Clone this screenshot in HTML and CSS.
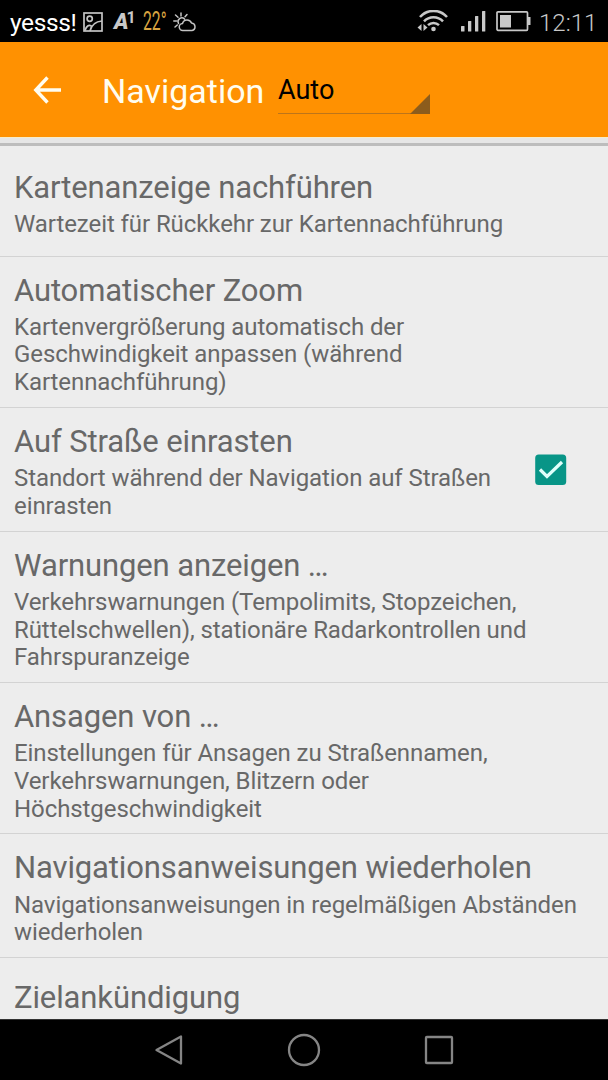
FILE: index.html
```html
<!DOCTYPE html>
<html lang="de">
<head>
<meta charset="utf-8">
<title>Navigation</title>
<link rel="stylesheet" href="styles.css">
</head>
<body>
<div class="screen">
  <header class="status">
    <div class="status-left">
      <span class="carrier">yesss!</span>
      <svg class="i-image" width="20" height="20" viewBox="0 0 20 20" fill="none" stroke="#c4c4c4" stroke-width="1.700"><rect x="1" y="1" width="18" height="18"/><circle cx="6.700" cy="6.700" r="2.600"/><path d="M2 18.500c1.500-4.500 3.500-6 6.500-4.500M7 19c1.500-6 5-9.500 12-10"/></svg>
      <span class="a1">A<sup>1</sup></span>
      <span class="temp">22°</span>
      <svg class="i-weather" width="24" height="20" viewBox="0 0 24 20" fill="none" stroke="#c4c4c4" stroke-width="1.500" stroke-linecap="round" stroke-linejoin="round"><path d="M10 18.500a3.500 3.500 0 0 1-.5-7 4.700 4.700 0 0 1 9-.5 3.800 3.800 0 0 1 .5 7.500zM5.500 11.500a3.800 3.800 0 0 1 6-4.500M8 1v3M2.500 3l2.500 2.200M.8 9h2.700M14 2.500l-2 2.300M2 15l2.300-2"/></svg>
    </div>
    <div class="status-right">
      <svg class="i-wifi" width="32" height="22" viewBox="0 0 32 22" fill="none" stroke="#c8c8c8" stroke-width="2.500"><path d="M3 7a18 18 0 0 1 27 0M7 11.300a13 13 0 0 1 19 0M11 15.200a8 8 0 0 1 11 0"/><circle cx="16.500" cy="19" r="2.300" fill="#c8c8c8" stroke="none"/><path d="M4.500 14v7L.5 17.500zM6.500 14v7l4-3.500z" fill="#c8c8c8" stroke="none"/></svg>
      <svg class="i-signal" width="26" height="22" viewBox="0 0 26 22" fill="#c8c8c8"><rect x="1" y="16" width="3.500" height="5.500" rx=".5"/><rect x="8" y="11" width="3.300" height="10.500" rx=".5"/><rect x="15" y="6" width="3.300" height="15.500" rx=".5"/><rect x="22" y="1" width="3.300" height="20.500" rx=".5"/></svg>
      <svg class="i-battery" width="35" height="22" viewBox="0 0 35 22"><rect x="1" y="1.800" width="30.500" height="18.500" rx="1" fill="none" stroke="#c8c8c8" stroke-width="1.700"/><path d="M4 5h11v12.500H4zM32 7h2.500v8H32z" fill="#c8c8c8"/></svg>
      <span class="clock">12:11</span>
    </div>
  </header>

  <div class="toolbar">
    <svg class="i-back" width="28" height="28" viewBox="0 0 28 28" fill="none" stroke="#fffdf0" stroke-width="3.400"><path d="M14.500 1.500L2.800 14l11.700 12.500M2.500 14H28"/></svg>
    <h1>Navigation</h1>
    <div class="spinner"><span>Auto</span><svg width="20" height="20" viewBox="0 0 20 20"><path d="M20 0v20H0z" fill="#8c5c1c"/></svg></div>
  </div>
  <div class="edge"></div>

  <main class="list">
    <section class="row row-min"><div><h2>Kartenanzeige nachführen</h2><p>Wartezeit für Rückkehr zur Kartennachführung</p></div></section>
    <section class="row"><div><h2>Automatischer Zoom</h2><p>Kartenvergrößerung automatisch der<br>Geschwindigkeit anpassen (während<br>Kartennachführung)</p></div></section>
    <section class="row"><div><h2>Auf Straße einrasten</h2><p>Standort während der Navigation auf Straßen<br>einrasten</p></div>
      <svg class="checkbox" width="32" height="32" viewBox="0 0 32 32"><rect x=".2" y=".5" width="31" height="30.500" rx="3.500" fill="#089587"/><path d="M5 15.500l7 7L27 8" fill="none" stroke="#e0fffb" stroke-width="3.200"/></svg></section>
    <section class="row"><div><h2>Warnungen anzeigen …</h2><p>Verkehrswarnungen (Tempolimits, Stopzeichen,<br>Rüttelschwellen), stationäre Radarkontrollen und<br>Fahrspuranzeige</p></div></section>
    <section class="row"><div><h2>Ansagen von …</h2><p>Einstellungen für Ansagen zu Straßennamen,<br>Verkehrswarnungen, Blitzern oder<br>Höchstgeschwindigkeit</p></div></section>
    <section class="row"><div><h2>Navigationsanweisungen wiederholen</h2><p>Navigationsanweisungen in regelmäßigen Abständen<br>wiederholen</p></div></section>
    <section class="row row-last"><div><h2>Zielankündigung</h2></div></section>
  </main>

  <nav class="navbar">
    <svg width="30" height="34" viewBox="0 0 30 34"><path d="M27 3.500v27L2.500 17z"/></svg>
    <svg width="34" height="34" viewBox="0 0 34 34"><circle cx="17" cy="17" r="15"/></svg>
    <svg width="30" height="30" viewBox="0 0 30 30"><rect x="2" y="2" width="26" height="26" rx=".8"/></svg>
  </nav>
</div>
</body>
</html>
```
FILE: styles.css
```css
* { box-sizing: border-box; margin: 0; padding: 0; }
body { background: #000; font-family: Roboto, "Noto Sans", sans-serif; }
svg { display: block; flex: none; }
.screen { width: 608px; height: 1080px; display: flex; flex-direction: column; overflow: hidden; background: #ededed; }

.status { flex: none; height: 42px; background: #000; display: flex; justify-content: space-between; padding: 0 12px 0 10px; color: #c8c8c8; }
.status-left, .status-right { display: flex; align-items: center; }
.carrier { color: #fff; font-size: 24.500px; line-height: 42px; width: 73px; margin-top: 3px; letter-spacing: -.35px; white-space: nowrap; }
.i-image { margin-top: 1px; }
.a1 { font: italic 900 22px/24px Roboto, sans-serif; width: 20px; margin-left: 11px; margin-top: 1px; white-space: nowrap; }
.a1 sup { font: 700 16px/10px Roboto, sans-serif; vertical-align: 6px; margin-left: -2px; }
.temp { color: #d9a441; font-size: 25px; line-height: 42px; transform: scaleX(.63); transform-origin: left; width: 30px; margin-left: 9px; margin-top: 2px; white-space: nowrap; }
.i-weather { margin-top: 1px; margin-left: 0; }
.i-signal { margin-left: 11px; }
.i-battery { margin-left: 10px; }
.clock { font-size: 24px; line-height: 42px; font-weight: 300; margin-left: 8px; margin-top: 3px; width: 57px; white-space: nowrap; }

.toolbar { flex: none; height: 95px; background: #ff9101; display: flex; align-items: center; }
.i-back { margin-left: 33px; }
h1 { color: #fffdf0; font-weight: 400; font-size: 34px; line-height: 40px; width: 176px; margin-left: 41px; margin-top: 2px; white-space: nowrap; }
.spinner { width: 152px; height: 42px; margin-top: 6px; margin-right: auto; border-bottom: 1px solid #bd751a; display: flex; justify-content: space-between; align-items: flex-end; font-size: 27px; line-height: 37px; }
.spinner svg { margin-bottom: -1px; }
.spinner span { align-self: flex-start; }
.edge { flex: none; height: 9px; background: #e6e6e6; border-top: 1px solid #f6ecca; border-bottom: 3px solid #bdbdbd; }

.list { flex: 1; min-height: 0; overflow: hidden; color: #686868; }
.row { display: flex; justify-content: space-between; padding: 15px 41px 10.300px 14px; border-bottom: 1px solid #d3d3d3; }
.row-min { height: 110.500px; padding-top: 23px; }
.row-last { padding-top: 21px; border: 0; }
h2 { font-size: 31px; line-height: 37px; font-weight: 400; letter-spacing: -.12px; white-space: nowrap; }
p { font-size: 24px; line-height: 27.600px; margin-top: 5.300px; letter-spacing: -.08px; white-space: nowrap; }
.checkbox { margin-top: 31px; }

.navbar { flex: none; height: 61px; background: #000; border-top: 1px solid #333; display: flex; align-items: center; justify-content: space-between; padding: 0 154px; fill: none; stroke: #858585; stroke-width: 2.300; stroke-linejoin: round; }
```
